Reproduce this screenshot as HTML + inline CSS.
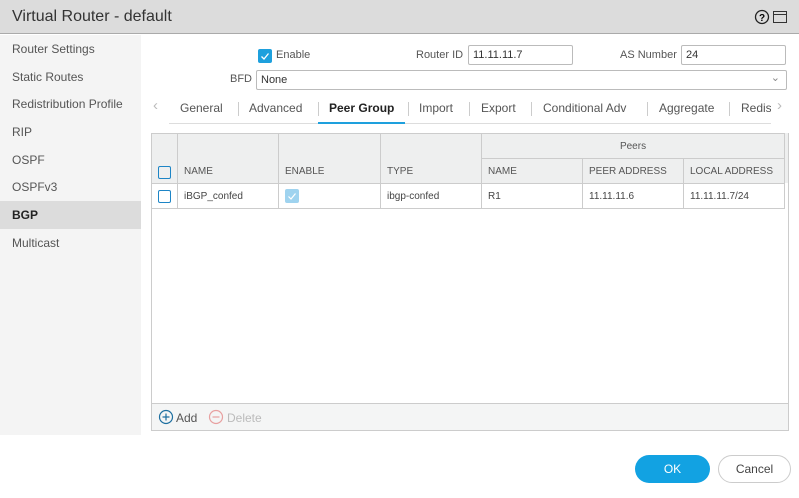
<!DOCTYPE html><html><head><style>
*{box-sizing:border-box;margin:0;padding:0}
body{width:799px;height:498px;background:#fff;font-family:"Liberation Sans",sans-serif;font-size:12px;color:#333;position:relative;overflow:hidden}
.a{position:absolute;white-space:nowrap}
.title{left:0;top:0;width:799px;height:34px;background:#dcdcdc;border-bottom:1px solid #aaa;font-size:16px;color:#333;padding:8px 12px}
.side{left:0;top:35px;width:141px;height:400px;background:#f4f4f4}
.side div{height:27.7px;padding:7px 12px;font-size:12px;color:#555}
.side .sel{background:#dcdcdc;color:#222;font-weight:bold}
.inp{border:1px solid #bbb;border-radius:2px;height:20px;padding:3px 4px;font-size:11px;color:#333}
.lbl{font-size:11px;color:#555}
.tab{top:101px;font-size:12px;color:#555}
.sep{top:102px;width:1px;height:14px;background:#ccc}
table{border-collapse:collapse;position:absolute;left:151px;top:133px;width:633px;font-size:10px;table-layout:fixed}
td{border:1px solid #ccc;padding:0 6px;height:25px;color:#444;white-space:nowrap;overflow:hidden}
.h td{background:#eeefef;color:#555}
.cb{display:inline-block;width:13px;height:13px;border:1.5px solid #1d85c6;border-radius:2px;vertical-align:middle}
</style></head><body>
<div class="a title">Virtual Router - default</div>
<svg class="a" style="left:754px;top:9px" width="36" height="16"><circle cx="8" cy="8" r="6.5" fill="none" stroke="#222" stroke-width="1.3"/><text x="8" y="12" font-size="10" font-weight="bold" text-anchor="middle" font-family="Liberation Sans">?</text><rect x="19.5" y="2.5" width="13" height="11" fill="none" stroke="#333"/><line x1="19.5" y1="5.5" x2="32.5" y2="5.5" stroke="#333"/></svg>
<div class="a side"><div>Router Settings</div><div>Static Routes</div><div>Redistribution Profile</div><div>RIP</div><div>OSPF</div><div>OSPFv3</div><div class="sel">BGP</div><div>Multicast</div></div>
<div class="a" style="left:258px;top:49px;width:14px;height:14px;background:#1ea0dd;border-radius:2px"><svg width="14" height="14"><path d="M3.5 7.5l2.5 2.5 4.5-5.5" fill="none" stroke="#fff" stroke-width="1.3"/></svg></div>
<div class="a lbl" style="left:276px;top:49px">Enable</div>
<div class="a lbl" style="left:416px;top:49px">Router ID</div>
<div class="a inp" style="left:468px;top:45px;width:105px">11.11.11.7</div>
<div class="a lbl" style="left:620px;top:49px">AS Number</div>
<div class="a inp" style="left:681px;top:45px;width:105px">24</div>
<div class="a lbl" style="left:230px;top:73px">BFD</div>
<div class="a inp" style="left:256px;top:70px;width:531px">None<span style="position:absolute;right:6px;top:0px;color:#888">&#8964;</span></div>
<div class="a" style="left:153px;top:97px;color:#bbb;font-size:15px">&lsaquo;</div>
<div class="a" style="left:777px;top:97px;color:#bbb;font-size:15px">&rsaquo;</div>
<div class="a" style="left:169px;top:123px;width:602px;height:1px;background:#ddd"></div>
<div class="a" style="left:318px;top:122px;width:87px;height:2px;background:#1ea0dd"></div>
<div class="a tab" style="left:180px">General</div><div class="a sep" style="left:238px"></div>
<div class="a tab" style="left:249px">Advanced</div><div class="a sep" style="left:318px"></div>
<div class="a tab" style="left:329px;color:#222;font-weight:bold">Peer Group</div><div class="a sep" style="left:408px"></div>
<div class="a tab" style="left:419px">Import</div><div class="a sep" style="left:469px"></div>
<div class="a tab" style="left:481px">Export</div><div class="a sep" style="left:531px"></div>
<div class="a tab" style="left:543px">Conditional Adv</div><div class="a sep" style="left:647px"></div>
<div class="a tab" style="left:659px">Aggregate</div><div class="a sep" style="left:729px"></div>
<div class="a tab" style="left:741px;width:30px;overflow:hidden">Redist</div>
<div class="a" style="left:151px;top:133px;width:638px;height:298px;border:1px solid #ccc"></div>
<div class="a" style="left:783px;top:133px;width:5px;height:50px;background:#eeefef"></div>
<table>
<col style="width:26px"><col style="width:101px"><col style="width:102px"><col style="width:101px"><col style="width:101px"><col style="width:101px"><col style="width:101px">
<tr class="h"><td rowspan="2" style="vertical-align:bottom;padding-bottom:4px"><span class="cb"></span></td><td rowspan="2" style="vertical-align:bottom;padding-bottom:6px">NAME</td><td rowspan="2" style="vertical-align:bottom;padding-bottom:6px">ENABLE</td><td rowspan="2" style="vertical-align:bottom;padding-bottom:6px">TYPE</td><td colspan="3" style="text-align:center;color:#555">Peers</td></tr>
<tr class="h"><td>NAME</td><td>PEER ADDRESS</td><td>LOCAL ADDRESS</td></tr>
<tr><td><span class="cb"></span></td><td>iBGP_confed</td><td><span style="display:inline-block;width:14px;height:14px;background:#9fd3ef;border-radius:2px;vertical-align:middle"><svg width="14" height="14"><path d="M3.5 7.5l2.5 2.5 4.5-5.5" fill="none" stroke="#fff" stroke-width="1.2"/></svg></span></td><td>ibgp-confed</td><td>R1</td><td>11.11.11.6</td><td>11.11.11.7/24</td></tr>
</table>
<div class="a" style="left:152px;top:403px;width:636px;height:27px;background:#f4f5f5;border-top:1px solid #ccc"></div>
<svg class="a" style="left:158px;top:409px" width="16" height="16"><circle cx="8" cy="8" r="6.5" fill="none" stroke="#1d6fa0" stroke-width="1.2"/><path d="M8 4.5v7M4.5 8h7" stroke="#1d6fa0" stroke-width="1.2"/></svg>
<div class="a" style="left:176px;top:411px;color:#555">Add</div>
<svg class="a" style="left:208px;top:409px" width="16" height="16"><circle cx="8" cy="8" r="6.5" fill="none" stroke="#e8a0a0" stroke-width="1.2"/><path d="M4.5 8h7" stroke="#e8a0a0" stroke-width="1.2"/></svg>
<div class="a" style="left:227px;top:411px;color:#bbb">Delete</div>
<div class="a" style="left:635px;top:455px;width:75px;height:28px;background:#12a2e2;border-radius:14px;color:#fff;text-align:center;line-height:28px;font-size:12px">OK</div>
<div class="a" style="left:718px;top:455px;width:73px;height:28px;border:1px solid #ccc;border-radius:14px;text-align:center;line-height:26px;font-size:12px;color:#444">Cancel</div>
</body></html>
